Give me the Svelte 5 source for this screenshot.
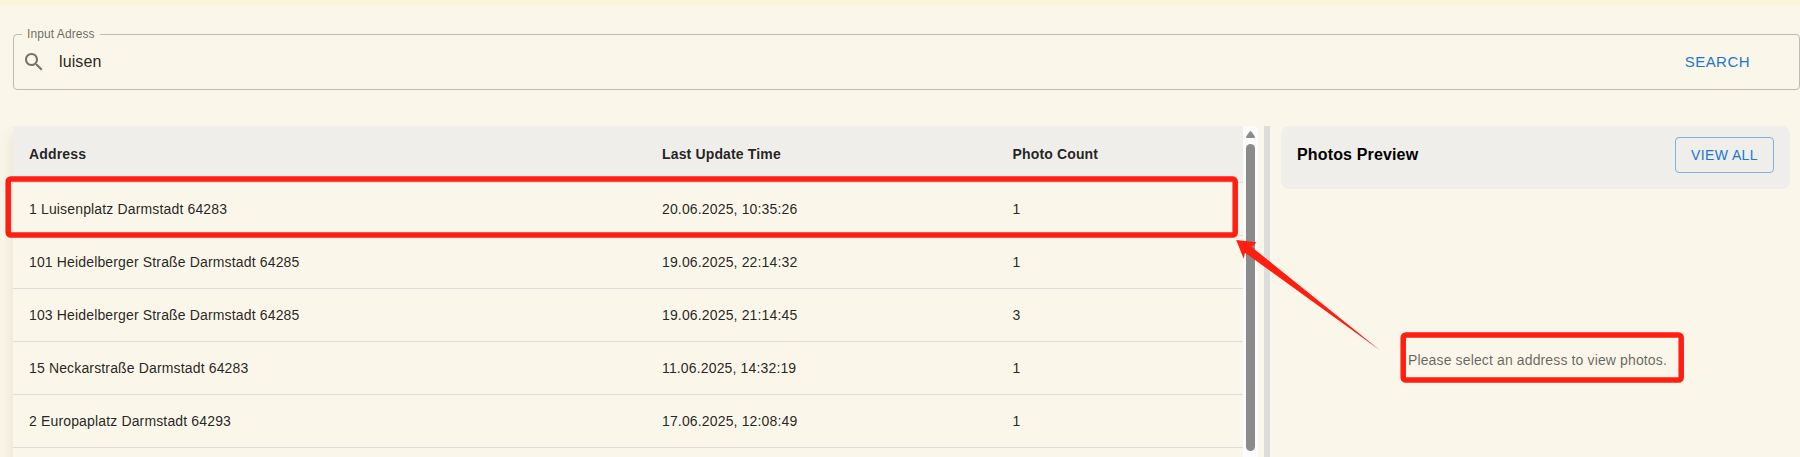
<script>
  const rows = [
    ['1 Luisenplatz Darmstadt 64283', '20.06.2025, 10:35:26', 1],
    ['101 Heidelberger Straße Darmstadt 64285', '19.06.2025, 22:14:32', 1],
    ['103 Heidelberger Straße Darmstadt 64285', '19.06.2025, 21:14:45', 3],
    ['15 Neckarstraße Darmstadt 64283', '11.06.2025, 14:32:19', 1],
    ['2 Europaplatz Darmstadt 64293', '17.06.2025, 12:08:49', 1]
  ];
</script>

<div class="page">
  <div class="topbar"></div>
  <fieldset class="search">
    <legend>Input Adress</legend>
    <div class="search-row">
      <svg class="magnifier" viewBox="0 0 24 24" width="24" height="24">
        <path d="M15.5 14h-.79l-.28-.27C15.41 12.59 16 11.11 16 9.5 16 5.91 13.09 3 9.5 3S3 5.91 3 9.5 5.91 16 9.5 16c1.61 0 3.09-.59 4.23-1.57l.27.28v.79l5 4.99L20.49 19l-4.99-5zm-6 0C7.01 14 5 11.99 5 9.5S7.01 5 9.5 5 14 7.01 14 9.5 11.99 14 9.5 14z" />
      </svg>
      <span class="value">luisen</span>
      <span class="search-btn">SEARCH</span>
    </div>
  </fieldset>

  <div class="content">
    <div class="table-box">
      <div class="table">
        <div class="row head">
          <span>Address</span><span>Last Update Time</span><span>Photo Count</span>
        </div>
        {#each rows as [address, updated, count]}
          <div class="row"><span>{address}</span><span>{updated}</span><span>{count}</span></div>
        {/each}
      </div>
      <div class="scrollbar">
        <svg width="9" height="7" viewBox="0 0 9 7"><path d="M3.7.6Q4.5-.3 5.3.6L8.7 5.2Q9.3 7 8 7H1Q-.3 7 .3 5.2Z" fill="#8b8b8b" /></svg>
        <div class="thumb"></div>
      </div>
    </div>
    <div class="splitter"></div>
    <div class="preview">
      <div class="preview-head">
        <h2>Photos Preview</h2>
        <button>VIEW ALL</button>
      </div>
      <p>Please select an address to view photos.</p>
    </div>
  </div>

  <svg class="marks" width="1800" height="457" viewBox="0 0 1800 457">
    <g fill="none" stroke="#ff1e10" stroke-width="5.5">
      <rect x="8.2" y="179" width="1227" height="56" rx="2.5" />
      <rect x="1403.2" y="335" width="278" height="45" rx="2.5" />
    </g>
    <path d="M1236.2 240L1256.5 242.3L1251.7 247L1380 350.3L1245 252.7L1243.7 258.8Z" fill="#ff1e10" />
  </svg>
</div>

<style>
  :global(body) { margin: 0; }
  .page {
    position: relative;
    box-sizing: border-box;
    width: 1800px;
    height: 457px;
    overflow: hidden;
    background: #faf6e9;
    font-family: "Liberation Sans", Arial, sans-serif;
    font-size: 14px;
    letter-spacing: 0.15px;
    color: rgba(0, 0, 0, 0.87);
  }
  .topbar { height: 6px; background: #fcf4dc; }
  .search {
    box-sizing: border-box;
    height: 63px;
    min-width: 0;
    margin: 21px 0 0 13px;
    padding: 0 0 0 8px;
    border: 1px solid #bfbbb0;
    border-radius: 4px;
  }
  legend {
    height: 14px;
    padding: 0 5px;
    font-size: 12px;
    line-height: 14px;
    letter-spacing: 0.08px;
    color: rgba(0, 0, 0, 0.6);
  }
  .search-row { display: flex; align-items: center; height: 41px; }
  .magnifier { fill: #757368; }
  .value { margin-left: 13px; font-size: 16px; letter-spacing: 0.1px; }
  .search-btn {
    margin-left: auto;
    margin-right: 49px;
    font-size: 15px;
    letter-spacing: 0.46px;
    color: #1976d2;
  }
  .content { display: flex; height: 331px; margin: 36px 10px 0 13px; }
  .table-box {
    display: flex;
    width: 1245px;
    height: 345px;
    border-radius: 4px;
    overflow: hidden;
    background: #faf6e9;
    box-shadow: 0 8px 16px rgba(80, 70, 30, 0.13);
    clip-path: inset(0 0 0 -13px);
  }
  .table { width: 1230px; }
  .row {
    display: grid;
    grid-template-columns: 633px 350px 247px;
    align-items: center;
    box-sizing: border-box;
    height: 53px;
    border-bottom: 1px solid #dedddc;
  }
  .row span { padding-left: 16px; }
  .row span:last-child { padding-left: 16.5px; }
  .head { height: 57px; background: #f0eeea; font-weight: 700; }
  .scrollbar {
    display: flex;
    flex-direction: column;
    align-items: center;
    width: 15px;
    background: #fcfcfc;
  }
  .scrollbar svg { margin-top: 5px; flex: none; }
  .thumb { width: 9px; height: 307px; margin-top: 6px; border-radius: 5px; background: #8b8b8b; }
  .splitter { width: 6px; margin-left: 6px; background: #dddddd; }
  .preview { display: flex; flex-direction: column; flex: 1; margin-left: 11px; }
  .preview-head {
    display: flex;
    align-items: flex-start;
    justify-content: space-between;
    box-sizing: border-box;
    height: 63px;
    padding: 11px 16px;
    border-radius: 8px;
    background: #f0eeea;
  }
  h2 { margin: 0; font-size: 16px; line-height: 35px; color: #000; }
  button {
    box-sizing: border-box;
    width: 99px;
    height: 36px;
    padding: 0;
    border: 1px solid #82b0dc;
    border-radius: 4px;
    background: none;
    font: 14px "Liberation Sans", Arial, sans-serif;
    letter-spacing: 0.4px;
    color: #1976d2;
  }
  p { margin: 163px 0 0 127px; line-height: 16px; letter-spacing: 0.13px; color: rgba(0, 0, 0, 0.6); }
  .marks { position: absolute; left: 0; top: 0; }
</style>
